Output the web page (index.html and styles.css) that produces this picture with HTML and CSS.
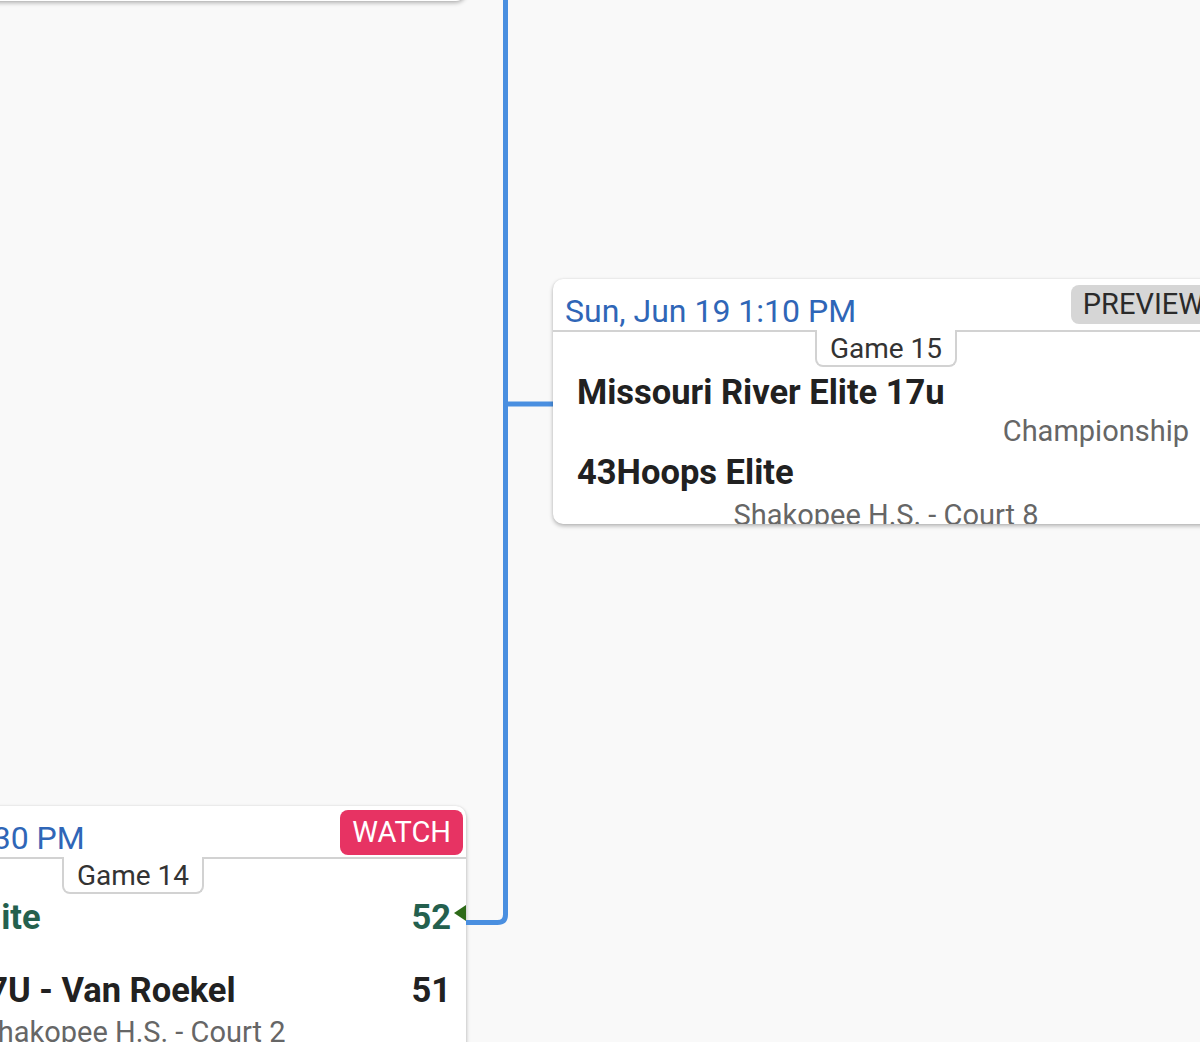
FILE: index.html
```html
<!DOCTYPE html>
<html lang="en">
<head>
<meta charset="utf-8">
<title>Bracket</title>
<link rel="stylesheet" href="styles.css">
</head>
<body>
<div class="bracket">
  <div class="col col-left">
    <div class="card card-prev"></div>
    <div class="card card-14">
      <div class="card-head">
        <div class="date">Fri, Jun 17 1:30 PM</div>
        <div class="badge badge-watch">WATCH</div>
      </div>
      <div class="game-tab">Game 14</div>
      <div class="team winner">
        <span class="name">43Hoops Elite</span>
        <span class="score">52</span>
        <span class="arrow"></span>
      </div>
      <div class="round round-empty"></div>
      <div class="team">
        <span class="name">Iowa Pro 17U - Van Roekel</span>
        <span class="score">51</span>
        <span class="arrow-space"></span>
      </div>
      <div class="location loc-14">Shakopee H.S. - Court 2</div>
    </div>
  </div>
  <div class="connector">
    <svg width="87" height="1042" viewBox="0 0 87 1042">
      <path d="M39.5 0 V914.5 Q39.5 922.5 31.5 922.5 H0" fill="none" stroke="#4a8fe0" stroke-width="5"/>
      <path d="M39.5 404 H87" fill="none" stroke="#4a8fe0" stroke-width="5"/>
    </svg>
  </div>
  <div class="col col-right">
    <div class="card card-15">
      <div class="card-head">
        <div class="date">Sun, Jun 19 1:10 PM</div>
        <div class="badge badge-preview">PREVIEW</div>
      </div>
      <div class="game-tab">Game 15</div>
      <div class="team team-first">
        <span class="name">Missouri River Elite 17u</span>
      </div>
      <div class="round">Championship</div>
      <div class="team">
        <span class="name">43Hoops Elite</span>
      </div>
      <div class="location loc-15">Shakopee H.S. - Court 8</div>
    </div>
  </div>
</div>
</body>
</html>
```
FILE: styles.css
```css
html, body {
  margin: 0;
  padding: 0;
  width: 1200px;
  height: 1042px;
  overflow: hidden;
  background: #f9f9f9;
  font-family: Roboto, "Noto Sans", sans-serif;
}

.bracket {
  display: flex;
  align-items: flex-start;
  margin-left: -200px;
}

.col {
  width: 666px;
  flex: none;
}

.connector {
  width: 87px;
  flex: none;
  height: 1042px;
}

.connector svg {
  display: block;
}

.card {
  background: #fff;
  border-radius: 10px;
  box-shadow: 0 2px 4px rgba(0, 0, 0, 0.28), 0 0 2px rgba(0, 0, 0, 0.08);
  overflow: hidden;
  box-sizing: border-box;
}

.card-prev {
  height: 301px;
  margin-top: -300px;
}

.card-14 {
  margin-top: 805px;
  height: 320px;
}

.card-15 {
  margin-top: 279px;
  height: 245px;
}

.card-head {
  display: flex;
  justify-content: space-between;
  align-items: flex-start;
  height: 51px;
  border-bottom: 2px solid #d2d2d2;
}

.date {
  font-size: 32px;
  line-height: 40px;
  padding: 12px 0 0 12px;
  color: #2f66b7;
  white-space: nowrap;
}

.badge {
  font-size: 29px;
  border-radius: 8px;
  padding: 0 12px;
  white-space: nowrap;
}

.badge-preview {
  margin: 6px 3px 0 0;
  height: 39px;
  line-height: 39px;
  background: #d6d6d6;
  color: #2a2a2a;
}

.badge-watch {
  margin: 4px 3px 0 0;
  height: 45px;
  line-height: 45px;
  background: #e73363;
  color: #fff;
}

.game-tab {
  width: 142px;
  height: 37px;
  box-sizing: border-box;
  margin: -2px auto 0;
  background: #fff;
  border: 2px solid #d2d2d2;
  border-top: none;
  border-radius: 0 0 8px 8px;
  font-size: 28px;
  line-height: 35px;
  padding-top: 1px;
  text-align: center;
  color: #333;
}

.team {
  display: flex;
  align-items: center;
  height: 40px;
  line-height: 40px;
  margin-top: 3px;
  padding-left: 24px;
  font-size: 34.5px;
  font-weight: 700;
  color: #212121;
  white-space: nowrap;
}

.team-first {
  margin-top: 5px;
}

.team .name {
  flex: 1;
}

.team .score {
  text-align: right;
}

.team.winner {
  color: #24604e;
}

.arrow {
  width: 0;
  height: 0;
  margin-left: 3px;
  margin-bottom: 8px;
  border-top: 8px solid transparent;
  border-bottom: 8px solid transparent;
  border-right: 12px solid #2d6a18;
}

.arrow-space {
  width: 15px;
}

.round {
  height: 36px;
  line-height: 36px;
  margin-top: 1px;
  padding-right: 30px;
  font-size: 29px;
  color: #666;
  text-align: right;
}

.round-empty {
  height: 27px;
  margin-top: 3px;
}

.location {
  height: 36px;
  line-height: 36px;
  font-size: 29px;
  color: #666;
  text-align: center;
  white-space: nowrap;
}

.loc-15 {
  margin-top: 5px;
}

.loc-14 {
  margin-top: 4px;
}
```
